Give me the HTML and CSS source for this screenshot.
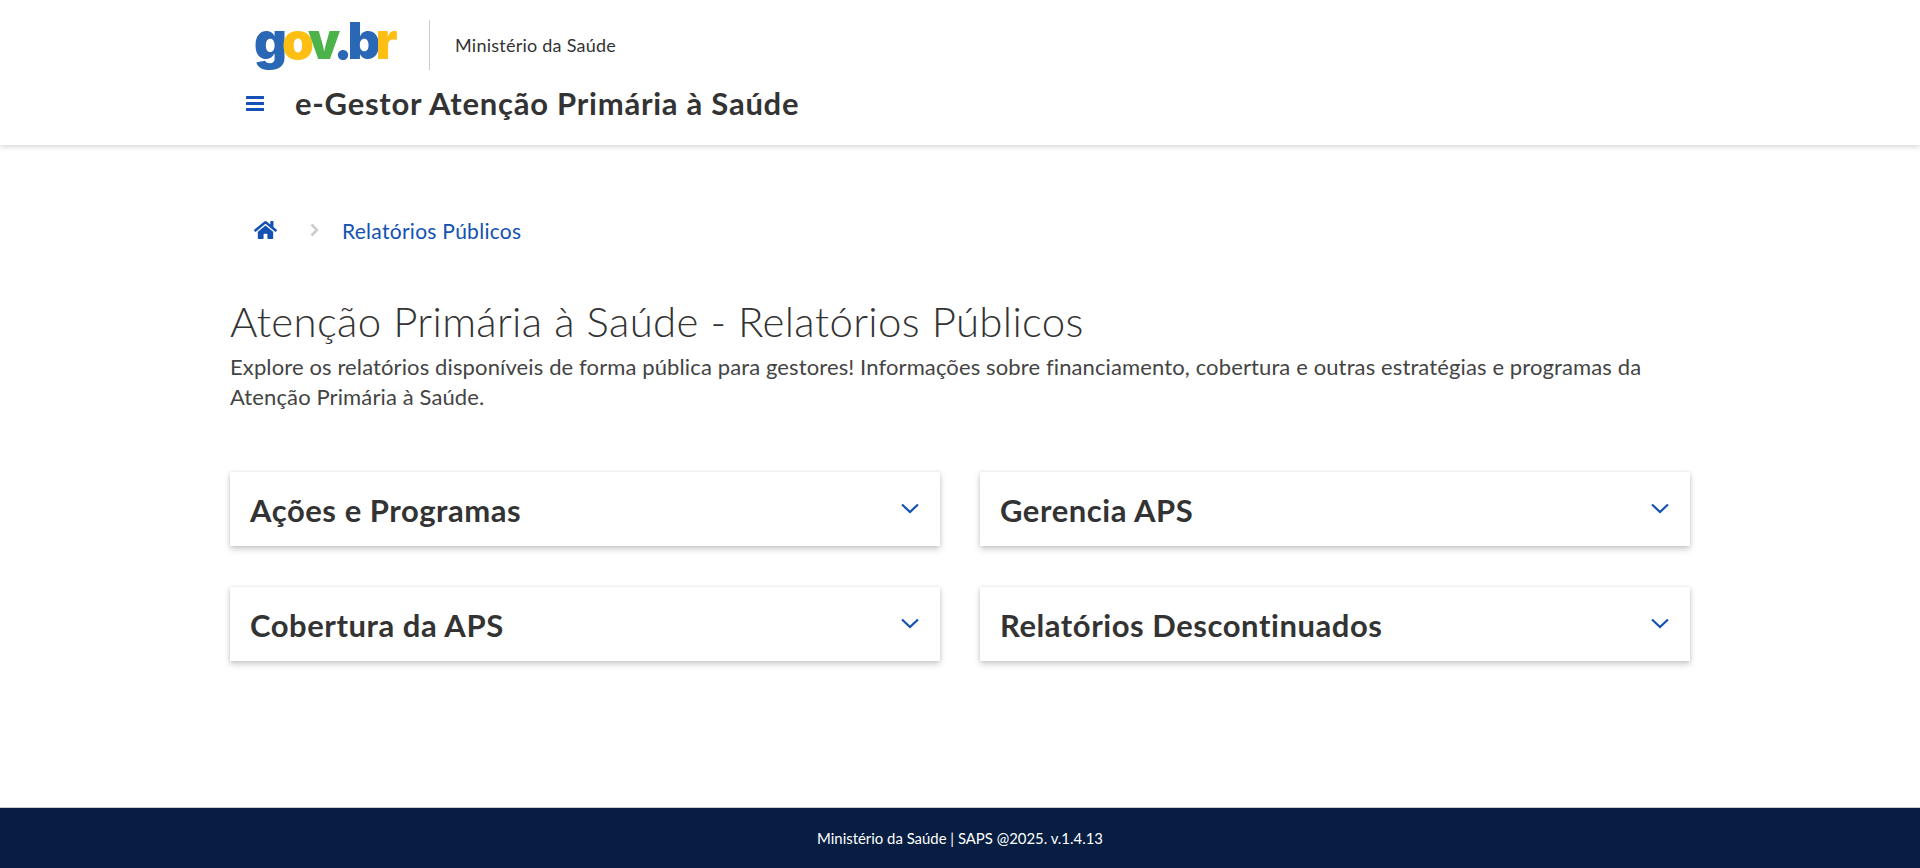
FILE: index.html
```html
<!DOCTYPE html>
<html lang="pt-BR">
<head>
<meta charset="utf-8">
<title>e-Gestor Atenção Primária à Saúde</title>
<link rel="stylesheet" href="styles.css">
</head>
<body>
<div class="page">
<header class="header">
  <div class="container">
    <div class="brand-row">
      <div class="logo"><span class="blue">g</span><span class="yellow">o</span><span class="green">v</span><span class="blue">.b</span><span class="yellow">r</span></div>
      <div class="divider"></div>
      <div class="ministry">Ministério da Saúde</div>
    </div>
    <div class="title-row">
      <svg class="menu" width="18" height="16" viewBox="0 0 18 16"><rect x="0" y="1" width="18" height="3" rx="0.5"/><rect x="0" y="7" width="18" height="3" rx="0.5"/><rect x="0" y="13" width="18" height="3" rx="0.5"/></svg>
      <div class="app-title">e-Gestor Atenção Primária à Saúde</div>
    </div>
  </div>
</header>
<main class="main">
  <nav class="crumbs">
    <svg class="home" width="23" height="18" viewBox="0 0 576 448"><path d="M280.4 116.6 96 268.5V432a16 16 0 0 0 16 16l112-.3a16 16 0 0 0 16-16V336a16 16 0 0 1 16-16h64a16 16 0 0 1 16 16v95.6a16 16 0 0 0 16 16.1l112 .3a16 16 0 0 0 16-16V268.400L295.700 116.600a12.200 12.200 0 0 0-15.300 0zM571.600 219.900 488 151V12a12 12 0 0 0-12-12h-56a12 12 0 0 0-12 12v72.900L318.500 11.300a48 48 0 0 0-61 0L4.300 219.900a12 12 0 0 0-1.600 16.900l25.500 31a12 12 0 0 0 16.900 1.600l235.200-193.700a12.200 12.200 0 0 1 15.300 0L530.900 269.400a12 12 0 0 0 16.900-1.600l25.500-31a12 12 0 0 0-1.700-16.900z"/></svg>
    <svg class="sep" width="9" height="14" viewBox="0 0 9 14"><path d="M1.500 1.500 7 7l-5.500 5.500"/></svg>
    <a class="crumb-link">Relatórios Públicos</a>
  </nav>
  <h1 class="page-title">Atenção Primária à Saúde - Relatórios Públicos</h1>
  <p class="lead">Explore os relatórios disponíveis de forma pública para gestores! Informações sobre financiamento, cobertura e outras estratégias e programas da Atenção Primária à Saúde.</p>
  <section class="cards">
    <div class="card"><span class="card-title">Ações e Programas</span><svg class="chev" width="18" height="11" viewBox="0 0 18 11"><path d="M1 1.500 9 9l8-7.500"/></svg></div>
    <div class="card"><span class="card-title">Gerencia APS</span><svg class="chev" width="18" height="11" viewBox="0 0 18 11"><path d="M1 1.500 9 9l8-7.500"/></svg></div>
    <div class="card"><span class="card-title">Cobertura da APS</span><svg class="chev" width="18" height="11" viewBox="0 0 18 11"><path d="M1 1.500 9 9l8-7.500"/></svg></div>
    <div class="card"><span class="card-title">Relatórios Descontinuados</span><svg class="chev" width="18" height="11" viewBox="0 0 18 11"><path d="M1 1.500 9 9l8-7.500"/></svg></div>
  </section>
</main>
<footer class="footer">Ministério da Saúde | SAPS @2025. v.1.4.13</footer>
</div>
</body>
</html>
```
FILE: styles.css
```css
* { box-sizing: border-box; }
html, body { margin: 0; height: 100%; }
body { font-family: "Lato", "Liberation Sans", sans-serif; color: #333; background: #fff; }
.page { height: 868px; display: flex; flex-direction: column; overflow: hidden; }
.header { height: 145px; background: #fff; box-shadow: 0 1px 6px rgba(51,51,51,.25); flex: none; position: relative; }
.container { padding-left: 246px; }
.brand-row { display: flex; align-items: center; height: 50px; margin-top: 20px; padding-left: 8px; }
.logo { width: 140px; font-family: "Inter", sans-serif; font-weight: 900; font-size: 51px; line-height: 50px; letter-spacing: -5px; margin-top: -8px; }
.blue { color: #2a67b5; }
.yellow { color: #fdbf14; }
.green { color: #4cb24a; }
.divider { width: 1px; height: 50px; background: #ccc; margin-left: 35px; }
.ministry { font-size: 18px; letter-spacing: .24px; margin-left: 25px; color: #333; }
.title-row { display: flex; align-items: center; margin-top: 15px; }
.menu { fill: #1351b4; flex: none; }
.app-title { font-size: 31px; letter-spacing: .75px; font-weight: 700; margin-left: 31px; line-height: 36px; color: #333; }
.main { flex: 1; padding: 0 230px; }
.crumbs { display: flex; align-items: center; height: 30px; margin-top: 70px; padding-left: 24px; }
.home { fill: #1351b4; flex: none; }
.sep { fill: none; stroke: #ccc; stroke-width: 2.500; flex: none; margin-left: 33px; }
.crumb-link { color: #1351b4; font-size: 21px; letter-spacing: .28px; margin-left: 23px; }
.page-title { font-size: 42px; letter-spacing: .32px; font-weight: 300; line-height: 50px; margin: 51px 0 0; color: #333; }
.lead { font-size: 22px; letter-spacing: .12px; line-height: 30px; margin: 6px 0 0; color: #444; max-width: 1460px; }
.cards { display: grid; grid-template-columns: 710px 710px; column-gap: 40px; row-gap: 41px; margin-top: 60px; }
.card { height: 74px; background: #fff; box-shadow: 0 3px 6px rgba(51,51,51,.25), 0 0 3px rgba(51,51,51,.1); padding: 19px 21px 0 20px; display: flex; justify-content: space-between; align-items: flex-start; }
.card-title { font-size: 31px; letter-spacing: .55px; font-weight: 700; line-height: 38px; color: #333; }
.chev { fill: none; stroke: #1351b4; stroke-width: 2.200; margin-top: 12px; flex: none; }
.footer { height: 61px; flex: none; background: #071d41; border-top: 1px solid #ccc; color: #fff; font-size: 14.900px; display: flex; align-items: center; justify-content: center; }
```
